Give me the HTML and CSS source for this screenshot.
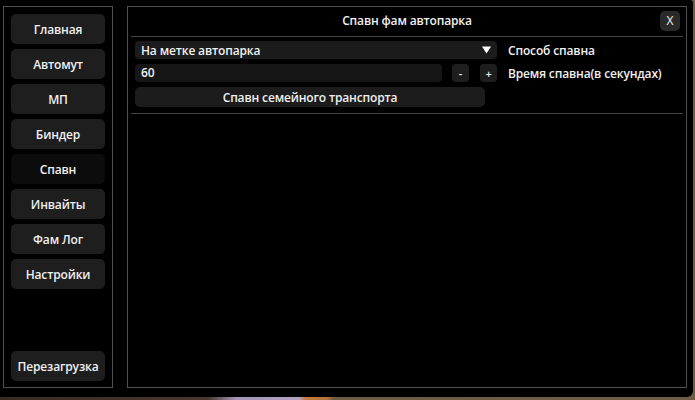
FILE: index.html
```html
<!DOCTYPE html>
<html lang="ru">
<head>
<meta charset="utf-8">
<title>Спавн фам автопарка</title>
<link rel="stylesheet" href="styles.css">
</head>
<body>
<div class="window">
  <nav class="sidebar">
    <button class="nav-btn">Главная</button>
    <button class="nav-btn">Автомут</button>
    <button class="nav-btn">МП</button>
    <button class="nav-btn">Биндер</button>
    <button class="nav-btn active">Спавн</button>
    <button class="nav-btn">Инвайты</button>
    <button class="nav-btn">Фам Лог</button>
    <button class="nav-btn">Настройки</button>
    <button class="nav-btn reload">Перезагрузка</button>
  </nav>
  <section class="panel">
    <header class="panel-head">
      <h1 class="title">Спавн фам автопарка</h1>
      <button class="close">X</button>
    </header>
    <div class="sep"></div>
    <div class="panel-body">
      <div class="row">
        <div class="combo">
          <span>На метке автопарка</span>
          <svg class="arrow" width="9" height="8" viewBox="0 0 9 8"><path d="M0 0.5H9L4.5 7.5Z" fill="#fff"/></svg>
        </div>
        <span class="label">Способ спавна</span>
      </div>
      <div class="row">
        <div class="input">60</div>
        <button class="step">-</button>
        <button class="step">+</button>
        <span class="label">Время спавна(в секундах)</span>
      </div>
      <div class="row">
        <button class="wide">Спавн семейного транспорта</button>
      </div>
    </div>
    <div class="sep"></div>
  </section>
</div>
</body>
</html>
```
FILE: styles.css
```css
* { box-sizing: border-box; }
html, body { margin: 0; padding: 0; }
body {
  width: 695px;
  height: 400px;
  overflow: hidden;
  background: linear-gradient(to right, #3a2a24 0, #4a3830 30%, #a595b5 34%, #b3a3c3 43%, #c37a3e 44%, #b8743c 47%, #6d5b44 48%, #6e5c45 100%);
  font-family: "Open Sans", "Noto Sans", "DejaVu Sans", sans-serif;
  font-size: 12px;
  font-weight: 600;
  letter-spacing: -0.15px;
  color: #f0f0f0;
}
.window {
  width: 693px;
  height: 397px;
  background: #000;
  border-radius: 0 3px 6px 0;
  display: flex;
  gap: 14px;
  padding: 6px 6px 9px 3px;
}
button {
  font: inherit;
  letter-spacing: inherit;
  color: inherit;
  border: 0;
  padding: 0;
  cursor: pointer;
}
.sidebar {
  width: 110px;
  border: 1px solid #505050;
  padding: 7px 7px 6px;
  display: flex;
  flex-direction: column;
  gap: 5px;
}
.nav-btn {
  height: 30px;
  background: #1e1e1f;
  border-radius: 5px;
  text-align: center;
}
.nav-btn.active { background: #0c0c0c; }
.nav-btn.reload { margin-top: auto; }
.panel {
  flex: 1;
  border: 1px solid #505050;
  display: flex;
  flex-direction: column;
}
.panel-head {
  display: grid;
  grid-template-columns: 1fr auto 1fr;
  align-items: center;
  padding: 4px 6px 5px;
}
.title {
  grid-column: 2;
  margin: 0;
  font-size: 12px;
  font-weight: 600;
  line-height: 20px;
}
.close {
  grid-column: 3;
  justify-self: end;
  width: 20px;
  height: 20px;
  border-radius: 5px;
  background: #2a2a2b;
  font-size: 12px;
  font-weight: 500;
  line-height: 20px;
}
.sep {
  height: 1px;
  margin: 0 3px;
  background: #444;
}
.panel-body {
  display: flex;
  flex-direction: column;
  gap: 5px;
  padding: 4px 7px 6px;
}
.row {
  display: flex;
  align-items: center;
  height: 18px;
}
.row:last-child { height: 20px; }
.combo {
  width: 362px;
  height: 18px;
  background: #1b1b1b;
  border-radius: 4px;
  display: flex;
  align-items: center;
  justify-content: space-between;
  padding: 0 6px;
}
.arrow { display: block; }
.label { margin-left: 11px; }
.input {
  width: 307px;
  height: 18px;
  background: #161616;
  border-radius: 4px;
  padding: 0 6px;
  line-height: 18px;
}
.step {
  width: 17px;
  height: 18px;
  margin-left: 10px;
  background: #1e1e1e;
  border-radius: 4px;
  font-size: 11px;
}
.step + .step { margin-left: 11px; }
.wide {
  width: 350px;
  height: 20px;
  background: #1c1c1c;
  border-radius: 5px;
}
```
